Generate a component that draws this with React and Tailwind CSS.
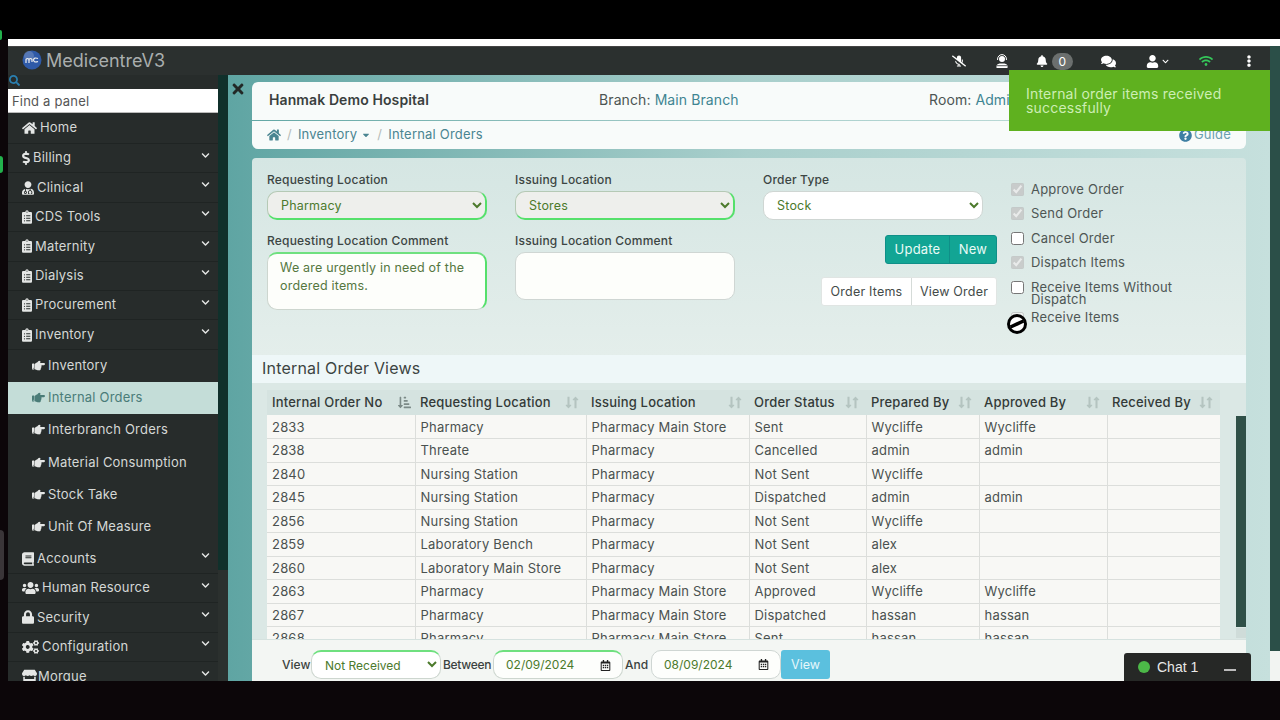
import React from "react";
import {
  FaHome, FaDollarSign, FaUserMd, FaClipboardList, FaHandPointRight, FaUsers, FaLock, FaCogs, FaStore, FaBook,
  FaTimes, FaSearch, FaChevronDown, FaMicrophoneSlash, FaBell, FaComments, FaUser, FaWifi,
  FaEllipsisV, FaQuestionCircle, FaCaretDown, FaSortAmountDownAlt, FaLongArrowAltDown, FaLongArrowAltUp, FaRegCalendarAlt,
} from "react-icons/fa";

const topMenu = [
  { label: "Home", icon: FaHome, iw: "w-[15px]", h: "h-[31px]" },
  { label: "Billing", icon: FaDollarSign, iw: "w-[8px]", arrow: true },
  { label: "Clinical", icon: FaUserMd, iw: "w-[12px]", arrow: true },
  { label: "CDS Tools", icon: FaClipboardList, iw: "w-[10px]", arrow: true },
  { label: "Maternity", icon: FaClipboardList, iw: "w-[10px]", arrow: true },
  { label: "Dialysis", icon: FaClipboardList, iw: "w-[10px]", arrow: true },
  { label: "Procurement", icon: FaClipboardList, iw: "w-[10px]", arrow: true },
  { label: "Inventory", icon: FaClipboardList, iw: "w-[10px]", arrow: true },
];

const subMenu = ["Inventory", "Internal Orders", "Interbranch Orders", "Material Consumption", "Stock Take", "Unit Of Measure"];

const bottomMenu = [
  { label: "Accounts", icon: FaBook, iw: "w-[12px]", arrow: true },
  { label: "Human Resource", icon: FaUsers, iw: "w-[17px]", arrow: true },
  { label: "Security", icon: FaLock, iw: "w-[12px]", arrow: true },
  { label: "Configuration", icon: FaCogs, iw: "w-[17px]", arrow: true },
  { label: "Morgue", icon: FaStore, iw: "w-[15px]", gap: "mr-[1px]", arrow: true },
];

const columns = [
  { label: "Internal Order No", w: "w-[148px]", active: true },
  { label: "Requesting Location", w: "w-[171px]" },
  { label: "Issuing Location", w: "w-[163px]" },
  { label: "Order Status", w: "w-[117px]" },
  { label: "Prepared By", w: "w-[113px]" },
  { label: "Approved By", w: "w-[128px]" },
  { label: "Received By", w: "w-[113px]" },
];

const rows = [
  ["2833", "Pharmacy", "Pharmacy Main Store", "Sent", "Wycliffe", "Wycliffe", ""],
  ["2838", "Threate", "Pharmacy", "Cancelled", "admin", "admin", ""],
  ["2840", "Nursing Station", "Pharmacy", "Not Sent", "Wycliffe", "", ""],
  ["2845", "Nursing Station", "Pharmacy", "Dispatched", "admin", "admin", ""],
  ["2856", "Nursing Station", "Pharmacy", "Not Sent", "Wycliffe", "", ""],
  ["2859", "Laboratory Bench", "Pharmacy", "Not Sent", "alex", "", ""],
  ["2860", "Laboratory Main Store", "Pharmacy", "Not Sent", "alex", "", ""],
  ["2863", "Pharmacy", "Pharmacy Main Store", "Approved", "Wycliffe", "Wycliffe", ""],
  ["2867", "Pharmacy", "Pharmacy Main Store", "Dispatched", "hassan", "hassan", ""],
  ["2868", "Pharmacy", "Pharmacy Main Store", "Sent", "hassan", "hassan", ""],
];

const checks = [
  { label: "Approve Order", checked: true, disabled: true },
  { label: "Send Order", checked: true, disabled: true },
  { label: "Cancel Order" },
  { label: "Dispatch Items", checked: true, disabled: true },
];

function MenuRow({ item }) {
  const Icon = item.icon;
  return (
    <div className={`flex items-center pl-[14px] pr-[8px] border-b border-[#1f2423] text-[#d5d8d6] ${item.h || "h-[29.4px]"}`}>
      <Icon className={`h-[14px] shrink-0 text-[#e4e6e5] ${item.iw} ${item.gap || "mr-[3px]"}`} />
      <span>{item.label}</span>
      {item.arrow && <FaChevronDown className="ml-auto mb-[6px] text-[9px] text-[#e4e6e5]" />}
    </div>
  );
}

function Field({ label, children, className }) {
  return (
    <div className={className}>
      <label className="block mb-[3px] text-[12px] leading-[16px] font-medium text-[#3c4543]">{label}</label>
      {children}
    </div>
  );
}

function SelectBox({ value, green }) {
  return (
    <select
      defaultValue={value}
      className={`w-[220px] h-[29px] pl-[9px] pr-[2px] rounded-[10px] text-[12.5px] text-[#4c7a2c] border ${green ? "bg-[#eeefec] border-[#b5c9b5] border-b-2 border-r-2 border-b-[#55e06b] border-r-[#55e06b]" : "bg-white border-[#cfd6d3]"}`}
    >
      <option>{value}</option>
    </select>
  );
}

function DateBox({ value, green }) {
  return (
    <div className={`flex items-center justify-between w-[130px] h-[29px] pl-[12px] pr-[11px] rounded-[10px] bg-[#fdfefc] border text-[12px] font-normal tracking-normal text-[#4c7a2c] ${green ? "border-[#cdd6cf] border-t-2 border-t-[#6fe07f]" : "border-[#cfd6d3]"}`}>
      <span>{value}</span>
      <FaRegCalendarAlt className="text-[11px] text-[#222]" />
    </div>
  );
}

export default function App() {
  return (
    <div className="relative w-[1280px] h-[720px] overflow-hidden bg-[#0c0609] text-[13px] tracking-[0.2px] text-[#444b49] font-['Inter','Liberation_Sans',sans-serif]">
      <div className="h-[40px] -mb-[40px] bg-black" />
      <div className="flex flex-col h-[681px] pt-[39px] pl-[8px]">
        <div className="h-[7px] bg-white shrink-0" />

        <div className="flex flex-1 min-h-0">
          <div className="flex flex-col w-[1262px] shrink-0 min-h-0">
            {/* top bar */}
            <div className="flex items-center h-[29px] shrink-0 bg-[#2b302f] border-t border-[#444]">
              <div className="flex items-center pl-[14px] pb-[2px] text-[18px] tracking-normal text-[#a9aeae]">
                <svg width="20" height="20" viewBox="0 0 20 20" className="mr-[4px]">
                  <circle cx="10" cy="10" r="9.5" fill="#2f5aa8" />
                  <circle cx="7" cy="6" r="5" fill="#7d96c4" opacity="0.5" />
                  <path d="M4 13V9.5Q5.5 7.5 7 9.5V13M7 9.5Q8.5 7.5 10 9.5V12M16 8.5Q12 7 11.5 10Q12 13 16 11.5" fill="none" stroke="#f0f0f0" strokeWidth="1.2" />
                </svg>
                MedicentreV3
              </div>
              <div className="flex items-center ml-auto pr-[15px] text-white">
                <FaMicrophoneSlash className="text-[14px] mr-[29px]" />
                <svg width="14" height="14" viewBox="0 0 14 14" className="mr-[27px]">
                  <circle cx="7" cy="5" r="3" fill="#fff" />
                  <path d="M2.6 6V5a4.4 4.4 0 0 1 8.8 0v1" fill="none" stroke="#fff" strokeWidth="1" />
                  <path d="M1.5 14v-1.5Q1.5 10 4.5 9.5h5q3 .5 3 3V14z" fill="#fff" />
                  <path d="M2 11.7h10" stroke="#2b302f" strokeWidth="0.8" />
                </svg>
                <FaBell className="text-[12px]" />
                <span className="ml-[4px] mr-[28px] w-[21px] h-[17px] rounded-full bg-[#6b6f6e] text-[12px] leading-[17px] text-center">0</span>
                <FaComments className="text-[15px] mr-[30px]" />
                <FaUser className="text-[13px]" />
                <FaChevronDown className="text-[7px] ml-[3px] mr-[30px]" />
                <FaWifi className="text-[14px] text-[#35c75a] mr-[30px]" />
                <FaEllipsisV className="text-[12px]" />
              </div>
            </div>

            <div className="flex flex-1 min-h-0">
              {/* sidebar */}
              <aside className="w-[210px] shrink-0 overflow-hidden bg-[#272c2b] text-[13px]">
                <div className="h-[14px] pl-[1px] text-[#2a7fb0]"><FaSearch className="text-[11px]" /></div>
                <input readOnly placeholder="Find a panel" className="w-full h-[24px] px-[4px] bg-white border-b border-[#bbb] text-[13px] placeholder:text-[#555]" />
                {topMenu.map((item) => <MenuRow key={item.label} item={item} />)}
                <div className="-mt-[0.5px] pb-[1.5px]">
                  {subMenu.map((label) => {
                    const on = label === "Internal Orders";
                    return (
                      <div key={label} className={`flex items-center h-[32.3px] pl-[24px] ${on ? "bg-[#c4ddd8] text-[#4a7c78]" : "text-[#d5d8d6]"}`}>
                        <FaHandPointRight className={`text-[13px] mr-[3px] ${on ? "text-[#4a7c78]" : "text-[#e4e6e5]"}`} />
                        {label}
                      </div>
                    );
                  })}
                </div>
                {bottomMenu.map((item) => <MenuRow key={item.label} item={item} />)}
              </aside>

              <div className="flex flex-col w-[10px] shrink-0">
                <div className="h-[495px] bg-[#10302b]" />
                <div className="flex-1 bg-[#2b302e]" />
              </div>

              {/* main */}
              <main className="flex flex-1 min-w-0 bg-gradient-to-r from-[#5fa5a3] via-[#a9cfcc] to-[#c6e0dd]">
                <div className="w-[24px] shrink-0 pt-[6px] pl-[2px] text-[#222826]"><FaTimes className="text-[16px]" /></div>

                <div className="flex flex-col w-[994px] shrink-0 pt-[7px] min-h-0">
                  <div className="flex items-center h-[38px] shrink-0 pb-[3px] px-[17px] rounded-t-[6px] bg-[#f8fbfa] text-[14px] tracking-[0.1px]">
                    <span className="w-[330px] font-semibold text-[#3a3f3e]">Hanmak Demo Hospital</span>
                    <span className="w-[330px] text-[#4c5553]">Branch: <span className="text-[#3f8592]">Main Branch</span></span>
                    <span className="text-[#4c5553]">Room: <span className="text-[#3f8592]">Admin</span></span>
                  </div>
                  <div className="flex items-center h-[28px] mt-[1px] shrink-0 px-[15px] rounded-b-[6px] bg-[#f8fbfa] text-[13px] text-[#4a8591]">
                    <FaHome className="text-[14px]" />
                    <span className="mx-[6px] text-[#b5bbb9]">/</span>
                    <span>Inventory</span>
                    <FaCaretDown className="ml-[4px] text-[10px]" />
                    <span className="mx-[6px] text-[#b5bbb9]">/</span>
                    <span>Internal Orders</span>
                    <FaQuestionCircle className="ml-auto mr-[2px] text-[#3e7fa3]" />
                    <span className="text-[#6a9fb0]">Guide</span>
                  </div>

                  {/* order form */}
                  <section className="flex h-[197px] mt-[9px] shrink-0 pl-[15px] pt-[14px] rounded-t-[4px] bg-gradient-to-b from-[#d5e6e3] to-[#e4eeeb]">
                    <div className="w-[744px] shrink-0">
                      <div className="flex gap-[28px]">
                        <Field label="Requesting Location"><SelectBox value="Pharmacy" green /></Field>
                        <Field label="Issuing Location"><SelectBox value="Stores" green /></Field>
                        <Field label="Order Type"><SelectBox value="Stock" /></Field>
                      </div>
                      <div className="flex mt-[13px]">
                        <Field label="Requesting Location Comment" className="w-[248px]">
                          <div className="w-[220px] h-[58px] px-[12px] pt-[5px] rounded-[10px] bg-[#fdfefb] border border-[#cdd6cf] border-r-2 border-r-[#55e06b] border-t-2 border-t-[#6fe07f] text-[12.5px] leading-[18px] text-[#55773f]">
                            We are urgently in need of the ordered items.
                          </div>
                        </Field>
                        <Field label="Issuing Location Comment" className="w-[248px]">
                          <div className="w-[220px] h-[48px] rounded-[10px] bg-[#fdfefb] border border-[#cfd6d3]" />
                        </Field>
                        <div className="flex flex-col items-end w-[234px] pt-[2px]">
                          <div className="flex h-[29px] rounded-[3px] bg-[#12a594] border border-[#0f8f88] text-[13px] text-[#e9fbf6]">
                            <span className="w-[64px] text-center leading-[27px] border-r border-[#0f8f88]">Update</span>
                            <span className="w-[46px] text-center leading-[27px]">New</span>
                          </div>
                          <div className="flex h-[29px] mt-[13px] rounded-[3px] bg-white border border-[#e0e5e3] text-[12.5px]">
                            <span className="w-[90px] text-center leading-[27px] border-r border-[#d5dbd8]">Order Items</span>
                            <span className="w-[84px] text-center leading-[27px]">View Order</span>
                          </div>
                        </div>
                      </div>
                    </div>
                    <div className="pt-[5px] w-[200px] text-[#4e5654]">
                      {checks.map((c) => (
                        <label key={c.label} className="flex items-center h-[24.5px]">
                          <input type="checkbox" readOnly checked={!!c.checked} disabled={c.disabled} className="w-[13px] h-[13px] m-0 mr-[7px]" />
                          {c.label}
                        </label>
                      ))}
                      <label className="flex items-start mt-[6px] leading-[12px]">
                        <input type="checkbox" className="w-[13px] h-[13px] m-0 mr-[7px] shrink-0" />
                        <span>Receive Items Without Dispatch</span>
                      </label>
                      <label className="flex items-start mt-[6px] leading-[12px]">
                        <input type="checkbox" disabled className="w-[13px] h-[13px] mt-[1px] mr-[7px] shrink-0" />
                        <span>Receive Items</span>
                      </label>
                    </div>
                  </section>

                  {/* order list */}
                  <div className="h-[28px] shrink-0 pl-[10px] bg-[#eef7f8] text-[16px] leading-[27px] text-[#3c4442]">Internal Order Views</div>
                  <section className="relative flex-1 min-h-0 flex flex-col bg-[#dbe8e5]">
                    <div className="flex-1 min-h-0 overflow-hidden pt-[7px] pl-[15px]">
                      <table className="w-[953px] table-fixed border-collapse">
                        <thead>
                          <tr className="h-[25px] bg-[#d5e3e0] text-left text-[#333a38]">
                            {columns.map((c) => (
                              <th key={c.label} className={`${c.w} pl-[5px] pr-[4px] font-medium`}>
                                <div className="flex items-center justify-between">
                                  {c.label}
                                  {c.active ? (
                                    <FaSortAmountDownAlt className="text-[13px] text-[#7c8a87]" />
                                  ) : (
                                    <span className="flex text-[13px] text-[#b4c4c0]"><FaLongArrowAltDown /><FaLongArrowAltUp className="-ml-[6px]" /></span>
                                  )}
                                </div>
                              </th>
                            ))}
                          </tr>
                        </thead>
                        <tbody>
                          {rows.map((r) => (
                            <tr key={r[0]} className="h-[23.5px] bg-[#f8f8f5] border-b border-[#dcdedb]">
                              {r.map((v, i) => (
                                <td key={i} className="pl-[5px] py-0 border-l border-[#dcdedb] first:border-l-0 leading-[18px] text-[#4a514f]">{v}</td>
                              ))}
                            </tr>
                          ))}
                        </tbody>
                      </table>
                    </div>
                    <div className="absolute right-0 top-[33px] w-[10px] h-[211px] bg-[#2f5048]" />
                    <div className="absolute right-0 top-[245px] w-[10px] h-[10px] bg-[#cfdcd9]" />

                    {/* view filter */}
                    <div className="flex items-center h-[42px] shrink-0 pt-[8px] pl-[30px] bg-[#f3f6f3] border-t border-[#d6e2df] text-[12px] font-medium tracking-normal text-[#3b4240]">
                      <span className="w-[29px]">View</span>
                      <select defaultValue="Not Received" className="w-[130px] h-[29px] pl-[9px] rounded-[10px] bg-white border border-[#cdd6cf] border-t-2 border-t-[#6fe07f] text-[12px] font-normal text-[#4c7a2c]">
                        <option>Not Received</option>
                      </select>
                      <span className="w-[50px] ml-[2px] tracking-[-0.3px]">Between</span>
                      <DateBox value="02/09/2024" green />
                      <span className="w-[28px] pl-[2px]">And</span>
                      <DateBox value="08/09/2024" />
                      <span className="w-[49px] h-[29px] rounded-[3px] bg-[#5bc0de] text-center text-[12.5px] font-normal leading-[29px] text-[#e6f7fb]">View</span>
                    </div>
                  </section>
                </div>
              </main>
            </div>
          </div>

          <div className="flex flex-col flex-1">
            <div className="h-[605px] bg-[#2b4f48]" />
            <div className="flex-1 bg-[#f2f4f2]" />
          </div>
        </div>
      </div>

      {/* toast */}
      <div className="absolute left-[1009px] top-[70px] w-[261px] h-[61px] pl-[17px] pt-[17px] bg-[#5fb11f] text-[14px] leading-[14px] text-[#cdeeb4]">
        Internal order items received successfully
      </div>

      {/* chat tab */}
      <div className="absolute left-[1124px] top-[653px] flex items-center w-[127px] h-[28px] pl-[14px] pr-[15px] rounded-t-[3px] bg-[#262826] text-[14px] tracking-normal text-[#e8e8e8] font-['Liberation_Sans',sans-serif]">
        <span className="w-[12px] h-[12px] mr-[7px] rounded-full bg-[#4cb848]" />
        Chat 1
        <span className="ml-auto mt-[6px] w-[12px] h-[1.5px] bg-[#bbb]" />
      </div>

      {/* not-allowed cursor */}
      <svg width="22" height="22" viewBox="0 0 22 22" className="absolute left-[1006px] top-[313px]">
        <circle cx="11" cy="11" r="10" fill="#000" />
        <circle cx="11" cy="11" r="7" fill="#fff" />
        <path d="M4.5 14L17.5 8" stroke="#000" strokeWidth="3.5" />
      </svg>

      {/* bits of the window behind, at the left edge */}
      <div className="absolute left-0 top-[156px] w-[3px] h-[17px] rounded-r-full bg-[#22b14c]" />
      <div className="absolute left-0 top-[30px] w-[2px] h-[10px] rounded-r-full bg-[#22b14c]" />
      <div className="absolute left-0 top-[530px] w-[4px] h-[50px] rounded-r-[4px] bg-[#3a3538]" />
    </div>
  );
}
